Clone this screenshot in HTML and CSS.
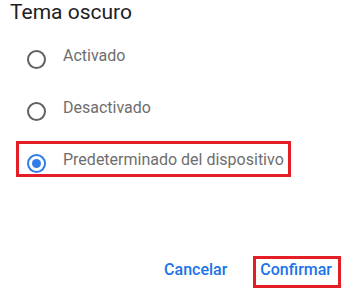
FILE: index.html
```html
<!DOCTYPE html>
<html lang="es">
<head>
<meta charset="utf-8">
<link rel="stylesheet" href="styles.css">
</head>
<body>
<div class="dialog">
  <h1 class="title">Tema oscuro</h1>
  <div class="options">
    <div class="option">
      <span class="radio"></span>
      <span class="label">Activado</span>
    </div>
    <div class="option">
      <span class="radio"></span>
      <span class="label">Desactivado</span>
    </div>
    <div class="option">
      <span class="radio checked"></span>
      <span class="label">Predeterminado del dispositivo</span>
    </div>
  </div>
  <div class="actions">
    <span class="btn">Cancelar</span>
    <span class="btn">Confirmar</span>
  </div>
  <div class="mark mark-option"></div>
  <div class="mark mark-confirm"></div>
</div>
</body>
</html>
```

FILE: styles.css
```css
html, body {
  margin: 0;
  padding: 0;
  background: #ffffff;
}
body {
  font-family: Roboto, "Liberation Sans", sans-serif;
}
.dialog {
  position: relative;
  width: 350px;
  height: 292px;
  overflow: hidden;
}
.title {
  margin: 0;
  padding-left: 10px;
  font-size: 21px;
  font-weight: 400;
  line-height: 24px;
  color: #202124;
}
.options {
  margin-top: 9px;
  display: flex;
  flex-direction: column;
}
.option {
  height: 52px;
  display: flex;
  align-items: center;
  padding-left: 27px;
}
.radio {
  box-sizing: border-box;
  width: 19px;
  height: 19px;
  border: 2px solid #616161;
  border-radius: 50%;
  margin-right: 17px;
  display: flex;
  align-items: center;
  justify-content: center;
  flex: none;
}
.radio.checked {
  border-color: #2f7cea;
}
.radio.checked::after {
  content: "";
  width: 9px;
  height: 9px;
  border-radius: 50%;
  background: #2f7cea;
}
.label {
  font-size: 16px;
  line-height: 20px;
  color: #6e6e6e;
  margin-bottom: 6px;
}
.actions {
  margin-top: 71px;
  display: flex;
  justify-content: flex-end;
  gap: 33px;
  padding-right: 18px;
}
.btn {
  font-size: 16px;
  font-weight: 500;
  line-height: 20px;
  color: #1a73e8;
}
.mark {
  position: absolute;
  box-sizing: border-box;
  border: 3px solid #e41e26;
}
.mark-option {
  left: 16px;
  top: 141px;
  width: 275px;
  height: 36px;
}
.mark-confirm {
  left: 253px;
  top: 256px;
  width: 88px;
  height: 32px;
}
```
